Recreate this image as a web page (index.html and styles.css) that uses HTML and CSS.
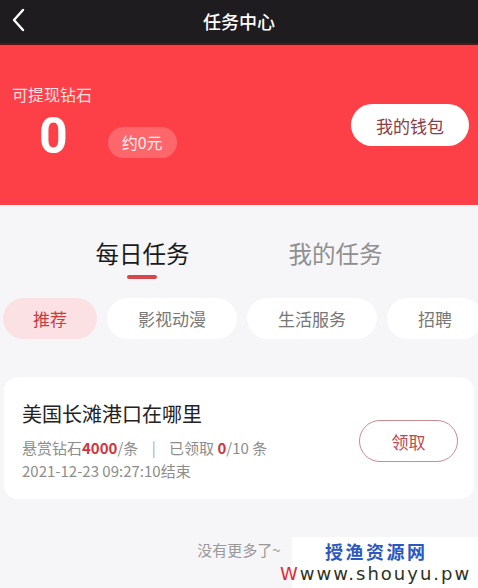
FILE: index.html
```html
<!DOCTYPE html>
<html lang="zh">
<head>
<meta charset="utf-8">
<title>任务中心</title>
<link rel="stylesheet" href="styles.css">
</head>
<body>
<div class="page">
  <header class="topbar">
    <svg class="back" width="14" height="24" viewBox="0 0 14 24"><path d="M12 2 L3 12 L12 22" fill="none" stroke="#fff" stroke-width="2.4" stroke-linecap="round" stroke-linejoin="round"/></svg>
    <h1 class="title">任务中心</h1>
  </header>
  <section class="hero">
    <div class="balance">
      <div class="label">可提现钻石</div>
      <div class="amount-row">
        <span class="amount">0</span>
        <span class="approx">约0元</span>
      </div>
    </div>
    <button class="wallet">我的钱包</button>
  </section>
  <nav class="tabs">
    <div class="tab active">每日任务<span class="bar"></span></div>
    <div class="tab">我的任务</div>
  </nav>
  <div class="chips">
    <span class="chip on">推荐</span>
    <span class="chip">影视动漫</span>
    <span class="chip">生活服务</span>
    <span class="chip">招聘</span>
  </div>
  <article class="card">
    <div class="info">
      <div class="task-title">美国长滩港口在哪里</div>
      <div class="meta">悬赏钻石<b>4000</b>/条 <span class="sep">|</span> 已领取 <b>0</b>/10 条</div>
      <div class="meta date">2021-12-23 09:27:10结束</div>
    </div>
    <button class="claim">领取</button>
  </article>
  <div class="nomore">没有更多了~</div>
  <div class="wm">
    <div class="wm-cn">授渔资源网</div>
    <div class="wm-en"><span class="wm-red">W</span>www.shouyu.pw</div>
  </div>
</div>
</body>
</html>
```
FILE: styles.css
```css
* { box-sizing: border-box; }
html, body { margin: 0; padding: 0; }
body {
  width: 478px;
  height: 588px;
  overflow: hidden;
  background: #f6f5f7;
  font-family: "Noto Sans CJK SC", "Noto Sans", sans-serif;
}
.page { position: relative; height: 588px; }
.topbar {
  height: 45px;
  background: #1e1c1f;
  border-bottom: 2px solid #5a1517;
  display: flex;
  align-items: center;
  justify-content: center;
  position: relative;
}
.back { position: absolute; left: 11px; top: 8px; }
.title {
  margin: 0 0 2px 0;
  color: #fff;
  font-size: 18px;
  font-weight: 500;
  line-height: 1;
}
.hero {
  height: 160px;
  background: #fd4047;
  display: flex;
  align-items: flex-start;
  justify-content: space-between;
  padding: 38px 9px 0 12px;
}
.label {
  color: rgba(255,255,255,0.85);
  font-size: 16px;
  line-height: 22px;
}
.amount-row {
  display: flex;
  align-items: center;
  margin-top: 4px;
}
.amount {
  color: #fff;
  font-family: Roboto, "Noto Sans", sans-serif;
  font-weight: 700;
  font-size: 50px;
  line-height: 54px;
  margin-left: 27px;
}
.approx {
  margin-left: 40px;
  margin-top: 12px;
  height: 31px;
  padding: 0 14px;
  border-radius: 16px;
  background: rgba(255,255,255,0.2);
  color: rgba(255,255,255,0.92);
  font-size: 16px;
  line-height: 31px;
}
.wallet {
  margin-top: 21px;
  width: 118px;
  height: 42px;
  border: none;
  border-radius: 21px;
  background: #fff;
  color: #8c3c43;
  font-family: inherit;
  font-size: 17px;
  padding: 0;
}
.tabs {
  display: flex;
  justify-content: center;
  gap: 99px;
  padding-top: 33px;
  height: 93px;
}
.tab {
  position: relative;
  font-size: 23.5px;
  line-height: 30px;
  color: #8f8f8f;
}
.tab.active { color: #1a1a1a; }
.bar {
  position: absolute;
  left: 31px;
  top: 37px;
  width: 30px;
  height: 4px;
  border-radius: 2px;
  background: #d6464c;
}
.chips {
  display: flex;
  gap: 10px;
  padding-left: 3px;
  white-space: nowrap;
  overflow: hidden;
  height: 41px;
}
.chip {
  flex: none;
  height: 41px;
  line-height: 41px;
  border-radius: 21px;
  background: #fff;
  color: #777;
  font-size: 17px;
  padding: 0 31px;
}
.chip.on {
  background: #fbe1e3;
  color: #cf3a42;
  padding: 0 30px;
}
.card {
  margin: 38px 4px 0 4px;
  height: 122px;
  background: #fff;
  border-radius: 14px;
  display: flex;
  align-items: center;
  justify-content: space-between;
  padding: 0 16px 0 18px;
}
.info { padding-top: 6px; }
.task-title {
  font-size: 20px;
  line-height: 28px;
  color: #222;
}
.meta {
  font-size: 15px;
  line-height: 23px;
  color: #8d8d8d;
}
.task-title + .meta { margin-top: 8px; }
.meta b { color: #d0353d; font-weight: 700; }
.sep { margin: 0 10px; color: #aaa; }
.claim {
  width: 99px;
  height: 42px;
  margin-top: 6px;
  border: 1px solid #c98b90;
  border-radius: 21px;
  background: #fff;
  color: #c04a51;
  font-family: inherit;
  font-size: 17px;
  padding: 0;
}
.nomore {
  margin-top: 40px;
  text-align: center;
  font-size: 15px;
  color: #999;
}
.wm {
  position: absolute;
  left: 292px;
  top: 537px;
  width: 186px;
  height: 51px;
  background: #fff;
}
.wm-cn {
  position: absolute;
  left: 33px;
  top: 1px;
  color: #2a57c0;
  font-family: "Noto Sans CJK SC", sans-serif;
  font-weight: 700;
  font-size: 18px;
  letter-spacing: 2.5px;
  line-height: 26px;
}
.wm-en {
  position: absolute;
  left: -12px;
  top: 24px;
  color: #2e3320;
  font-family: "DejaVu Sans", sans-serif;
  font-size: 18px;
  letter-spacing: 2px;
  line-height: 26px;
  white-space: nowrap;
}
.wm-red { color: #e02a34; }
```
